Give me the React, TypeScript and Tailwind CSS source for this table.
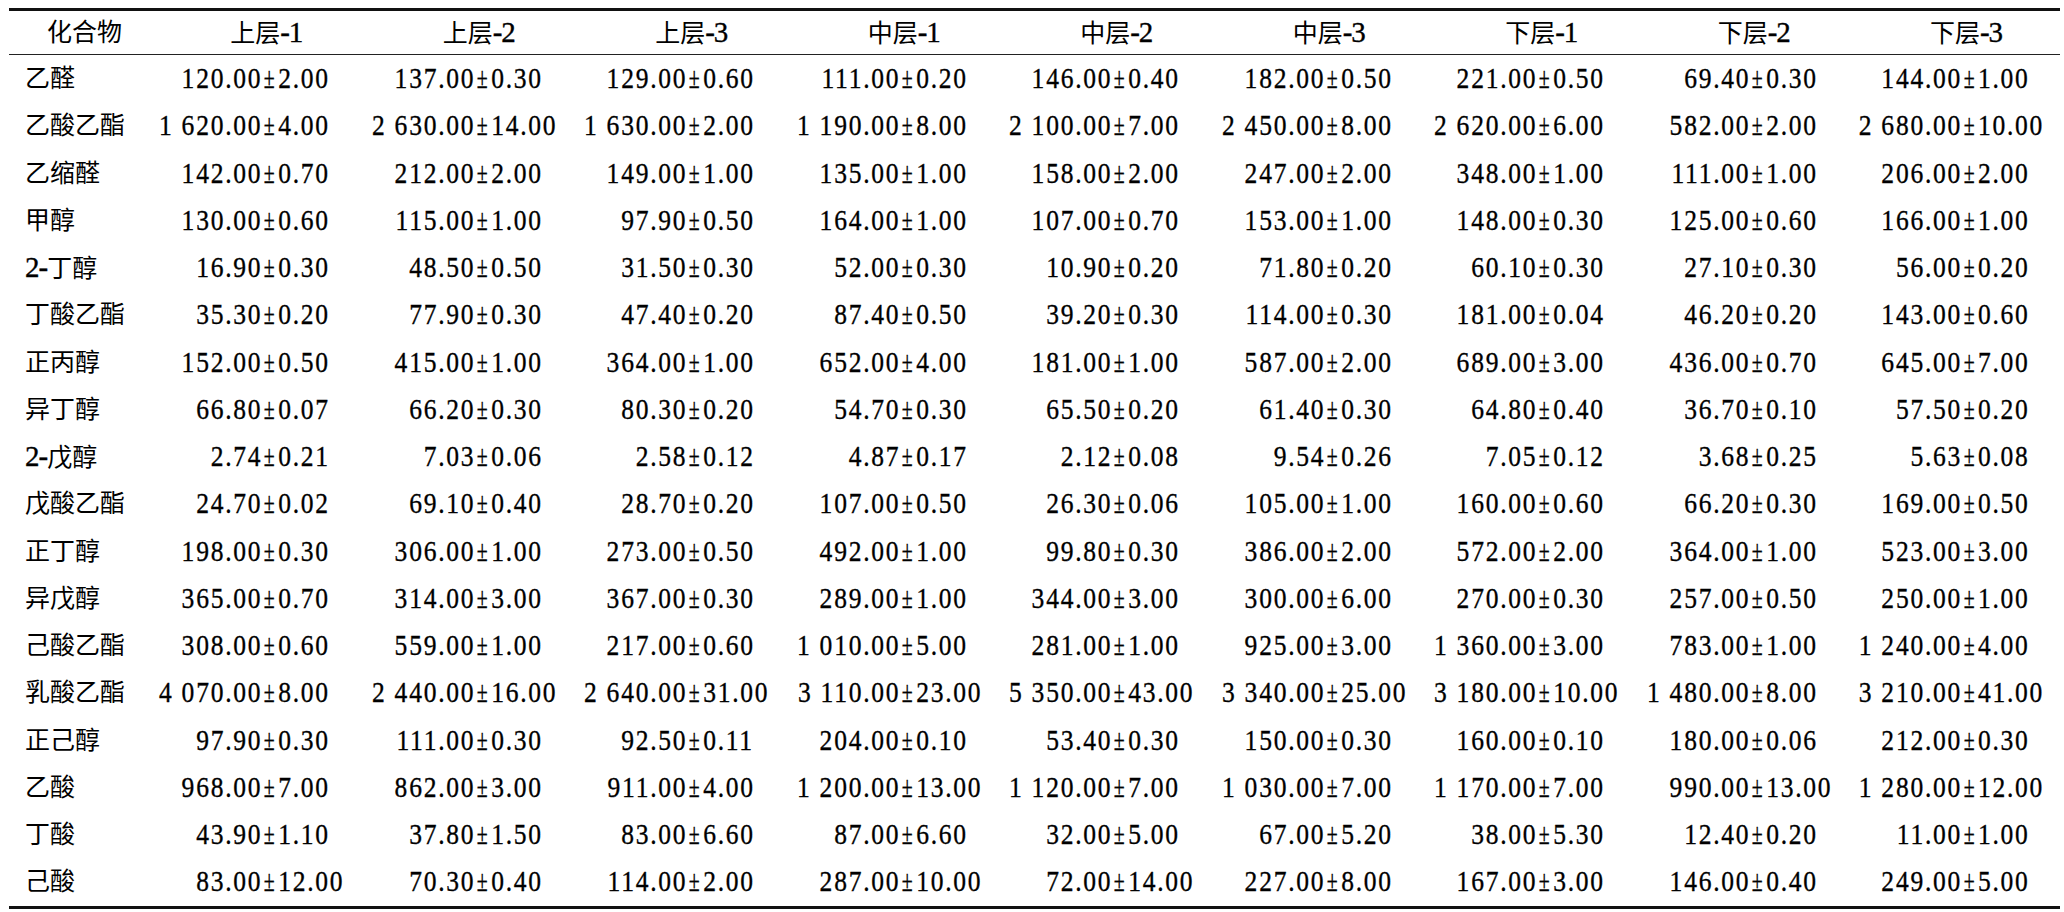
const HEADERS = ['上层-1', '上层-2', '上层-3', '中层-1', '中层-2', '中层-3', '下层-1', '下层-2', '下层-3']

const ROWS: [string, string[]][] = [
  ['乙醛', ['120.00±2.00', '137.00±0.30', '129.00±0.60', '111.00±0.20', '146.00±0.40', '182.00±0.50', '221.00±0.50', '69.40±0.30', '144.00±1.00']],
  ['乙酸乙酯', ['1 620.00±4.00', '2 630.00±14.00', '1 630.00±2.00', '1 190.00±8.00', '2 100.00±7.00', '2 450.00±8.00', '2 620.00±6.00', '582.00±2.00', '2 680.00±10.00']],
  ['乙缩醛', ['142.00±0.70', '212.00±2.00', '149.00±1.00', '135.00±1.00', '158.00±2.00', '247.00±2.00', '348.00±1.00', '111.00±1.00', '206.00±2.00']],
  ['甲醇', ['130.00±0.60', '115.00±1.00', '97.90±0.50', '164.00±1.00', '107.00±0.70', '153.00±1.00', '148.00±0.30', '125.00±0.60', '166.00±1.00']],
  ['2-丁醇', ['16.90±0.30', '48.50±0.50', '31.50±0.30', '52.00±0.30', '10.90±0.20', '71.80±0.20', '60.10±0.30', '27.10±0.30', '56.00±0.20']],
  ['丁酸乙酯', ['35.30±0.20', '77.90±0.30', '47.40±0.20', '87.40±0.50', '39.20±0.30', '114.00±0.30', '181.00±0.04', '46.20±0.20', '143.00±0.60']],
  ['正丙醇', ['152.00±0.50', '415.00±1.00', '364.00±1.00', '652.00±4.00', '181.00±1.00', '587.00±2.00', '689.00±3.00', '436.00±0.70', '645.00±7.00']],
  ['异丁醇', ['66.80±0.07', '66.20±0.30', '80.30±0.20', '54.70±0.30', '65.50±0.20', '61.40±0.30', '64.80±0.40', '36.70±0.10', '57.50±0.20']],
  ['2-戊醇', ['2.74±0.21', '7.03±0.06', '2.58±0.12', '4.87±0.17', '2.12±0.08', '9.54±0.26', '7.05±0.12', '3.68±0.25', '5.63±0.08']],
  ['戊酸乙酯', ['24.70±0.02', '69.10±0.40', '28.70±0.20', '107.00±0.50', '26.30±0.06', '105.00±1.00', '160.00±0.60', '66.20±0.30', '169.00±0.50']],
  ['正丁醇', ['198.00±0.30', '306.00±1.00', '273.00±0.50', '492.00±1.00', '99.80±0.30', '386.00±2.00', '572.00±2.00', '364.00±1.00', '523.00±3.00']],
  ['异戊醇', ['365.00±0.70', '314.00±3.00', '367.00±0.30', '289.00±1.00', '344.00±3.00', '300.00±6.00', '270.00±0.30', '257.00±0.50', '250.00±1.00']],
  ['己酸乙酯', ['308.00±0.60', '559.00±1.00', '217.00±0.60', '1 010.00±5.00', '281.00±1.00', '925.00±3.00', '1 360.00±3.00', '783.00±1.00', '1 240.00±4.00']],
  ['乳酸乙酯', ['4 070.00±8.00', '2 440.00±16.00', '2 640.00±31.00', '3 110.00±23.00', '5 350.00±43.00', '3 340.00±25.00', '3 180.00±10.00', '1 480.00±8.00', '3 210.00±41.00']],
  ['正己醇', ['97.90±0.30', '111.00±0.30', '92.50±0.11', '204.00±0.10', '53.40±0.30', '150.00±0.30', '160.00±0.10', '180.00±0.06', '212.00±0.30']],
  ['乙酸', ['968.00±7.00', '862.00±3.00', '911.00±4.00', '1 200.00±13.00', '1 120.00±7.00', '1 030.00±7.00', '1 170.00±7.00', '990.00±13.00', '1 280.00±12.00']],
  ['丁酸', ['43.90±1.10', '37.80±1.50', '83.00±6.60', '87.00±6.60', '32.00±5.00', '67.00±5.20', '38.00±5.30', '12.40±0.20', '11.00±1.00']],
  ['己酸', ['83.00±12.00', '70.30±0.40', '114.00±2.00', '287.00±10.00', '72.00±14.00', '227.00±8.00', '167.00±3.00', '146.00±0.40', '249.00±5.00']],
]

// CJK runs get their own size, latin runs are condensed Times
function Mixed({ text }: { text: string }) {
  const parts = text.match(/[\u4e00-\u9fff]+|[^\u4e00-\u9fff]+/g) ?? []
  return (
    <span className="whitespace-nowrap">
      {parts.map((p, i) =>
        /[\u4e00-\u9fff]/.test(p) ? (
          <span key={i} className="text-[25px]">
            {p}
          </span>
        ) : (
          <span key={i} className="text-[29px] tracking-[-1px] [-webkit-text-stroke:0.35px_black]">
            {p}
          </span>
        ),
      )}
    </span>
  )
}

function ValueCell({ value, last }: { value: string; last: boolean }) {
  const [mean, err] = value.split('±')
  return (
    <div className={`flex h-full items-center ${last ? 'pl-[20px]' : 'pl-[8px]'}`}>
      <div className="grid w-full origin-center scale-x-[0.88] grid-cols-[minmax(0,1fr)_auto_minmax(0,1fr)] items-center whitespace-nowrap text-[29px] leading-none tracking-[2px] [-webkit-text-stroke:0.35px_black]">
        <span className="flex justify-end">
          <span>{mean}</span>
        </span>
        <span className="inline-block scale-x-[0.78]">±</span>
        <span>{err}</span>
      </div>
    </div>
  )
}

export default function App() {
  return (
    <div
      className="h-[912px] w-[2064px] overflow-hidden bg-white pl-[9px] pt-[8px] text-black"
      style={{ fontFamily: '"Liberation Serif", "Noto Sans CJK SC", serif' }}
    >
      <div className="w-[2051px] border-y-[3px] border-[#111]">
        <div className="grid h-[44px] grid-cols-[151px_repeat(8,212.5px)_200px] items-center border-b-[1.5px] border-[#222] leading-none">
          <div className="text-center">
            <Mixed text="化合物" />
          </div>
          {HEADERS.map((h, i) => (
            <div key={h} className={`text-center ${i === 8 ? 'pl-[12px]' : ''}`}>
              <Mixed text={h} />
            </div>
          ))}
        </div>
        {ROWS.map(([name, vals]) => (
          <div
            key={name}
            className="grid h-[47.25px] grid-cols-[151px_repeat(8,212.5px)_200px] items-center leading-none"
          >
            <div className="pl-[16px]">
              <Mixed text={name} />
            </div>
            {vals.map((v, i) => (
              <ValueCell key={i} value={v} last={i === 8} />
            ))}
          </div>
        ))}
      </div>
    </div>
  )
}
